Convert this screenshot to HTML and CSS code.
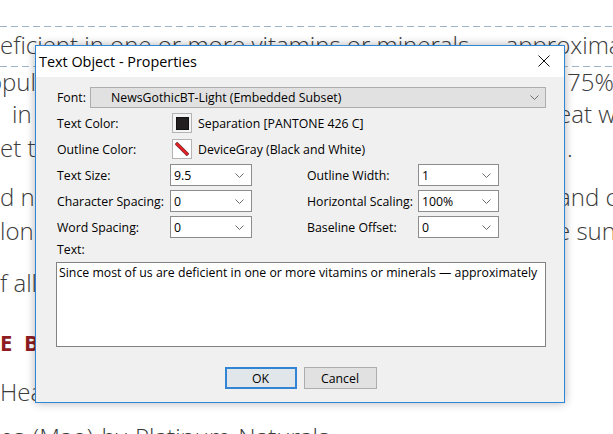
FILE: index.html
```html
<!DOCTYPE html>
<html>
<head>
<meta charset="utf-8">
<link rel="stylesheet" href="styles.css">
</head>
<body>
<div class="page">
  <div class="dash"></div>
  <div class="line l1"><span class="full">eficient in one or more vitamins or minerals — approximately</span></div>
  <div class="dash d2"></div>
  <div class="line l2"><span class="lt"><span class="sh-o">opul</span></span><span class="rt r75">75%</span></div>
  <div class="line l3"><span class="lt"><span class="sh-in">in</span></span><span class="rt reat">eat w</span></div>
  <div class="line l4"><span class="lt">et t</span><span class="rt rdot">.</span></div>
  <div class="line l5"><span class="lt">d nu</span><span class="rt rand">and c</span></div>
  <div class="line l6"><span class="lt">lon</span><span class="rt rsun">e sun</span></div>
  <div class="line l7"><span class="lt">f all</span></div>
  <div class="line l8 red"><span class="lt">E B</span></div>
  <div class="line l9"><span class="lt">Hea</span></div>
  <div class="line l10"><span class="full sh-mao">es (Mao) by Platinum Naturals</span></div>
</div>

<div class="dialog">
  <div class="titlebar">
    <span class="title">Text Object - Properties</span>
    <svg class="close" width="12" height="12" viewBox="0 0 12 12"><path d="M0.5 0.5 L11.5 11.5 M11.5 0.5 L0.5 11.5" stroke="#111" stroke-width="1" fill="none"/></svg>
  </div>
  <div class="dbody">
    <div class="row">
      <span class="lbl lfont">Font:</span>
      <div class="select">
        <span class="val">NewsGothicBT-Light (Embedded Subset)</span>
        <svg class="chev" width="9" height="5" viewBox="0 0 9 5"><polyline points="0.5,0.5 4.5,4.5 8.5,0.5" fill="none" stroke="#6d6d6d" stroke-width="1"/></svg>
      </div>
    </div>
    <div class="row">
      <span class="lbl c1">Text Color:</span>
      <span class="swatch"><span class="dark"></span></span>
      <span class="swtext">Separation [PANTONE 426 C]</span>
    </div>
    <div class="row">
      <span class="lbl c1">Outline Color:</span>
      <span class="swatch white">
        <svg width="14" height="14" viewBox="0 0 14 14"><polygon points="0,2.2 2.2,0 14,11.8 11.8,14" fill="#e01e24" stroke="#3a1a1a" stroke-width="0.6"/></svg>
      </span>
      <span class="swtext">DeviceGray (Black and White)</span>
    </div>
    <div class="row">
      <span class="lbl c1">Text Size:</span>
      <div class="combo"><span class="val">9.5</span><svg class="chev" width="9" height="5" viewBox="0 0 9 5"><polyline points="0.5,0.5 4.5,4.5 8.5,0.5" fill="none" stroke="#6d6d6d" stroke-width="1"/></svg></div>
      <span class="lbl c3">Outline Width:</span>
      <div class="combo"><span class="val">1</span><svg class="chev" width="9" height="5" viewBox="0 0 9 5"><polyline points="0.5,0.5 4.5,4.5 8.5,0.5" fill="none" stroke="#6d6d6d" stroke-width="1"/></svg></div>
    </div>
    <div class="row">
      <span class="lbl c1">Character Spacing:</span>
      <div class="combo"><span class="val">0</span><svg class="chev" width="9" height="5" viewBox="0 0 9 5"><polyline points="0.5,0.5 4.5,4.5 8.5,0.5" fill="none" stroke="#6d6d6d" stroke-width="1"/></svg></div>
      <span class="lbl c3">Horizontal Scaling:</span>
      <div class="combo"><span class="val">100%</span><svg class="chev" width="9" height="5" viewBox="0 0 9 5"><polyline points="0.5,0.5 4.5,4.5 8.5,0.5" fill="none" stroke="#6d6d6d" stroke-width="1"/></svg></div>
    </div>
    <div class="row">
      <span class="lbl c1">Word Spacing:</span>
      <div class="combo"><span class="val">0</span><svg class="chev" width="9" height="5" viewBox="0 0 9 5"><polyline points="0.5,0.5 4.5,4.5 8.5,0.5" fill="none" stroke="#6d6d6d" stroke-width="1"/></svg></div>
      <span class="lbl c3">Baseline Offset:</span>
      <div class="combo"><span class="val">0</span><svg class="chev" width="9" height="5" viewBox="0 0 9 5"><polyline points="0.5,0.5 4.5,4.5 8.5,0.5" fill="none" stroke="#6d6d6d" stroke-width="1"/></svg></div>
    </div>
    <div class="textlbl">Text:</div>
    <div class="textarea">Since most of us are deficient in one or more vitamins or minerals — approximately</div>
    <div class="buttons">
      <button class="btn ok">OK</button>
      <button class="btn">Cancel</button>
    </div>
  </div>
</div>
</body>
</html>
```

FILE: styles.css
```css
* { box-sizing: border-box; margin: 0; padding: 0; }
html, body { width: 613px; height: 434px; overflow: hidden; background: #ffffff; }
body { position: relative; font-family: "Open Sans", "Noto Sans", sans-serif; }

.page {
  padding-top: 26px;
  color: #3b3b3b;
  font-weight: 300;
  font-size: 24px;
}
.dash {
  height: 1px;
  background: repeating-linear-gradient(90deg, #9fb3c7 0 7px, transparent 7px 11px);
}
.line {
  display: flex;
  white-space: nowrap;
  overflow: hidden;
  height: 34px;
  line-height: 34px;
}
.lt { width: 560px; flex: none; overflow: hidden; }
.rt { flex: none; }
.full { flex: none; }
.l1 { height: 39px; line-height: 36px; }
.l2 { height: 30px; line-height: 30px; }
.l5 { margin-top: 15px; }
.l7 { margin-top: 18px; }
.l8 { margin-top: 25px; }
.l9 { margin-top: 16px; }
.l10 { margin-top: 11px; }
.sh-o { margin-left: -12px; }
.sh-in { margin-left: 12px; }
.sh-mao { margin-left: 0; word-spacing: 2px; }
.r75 { margin-left: 7px; }
.reat { margin-left: -2px; }
.rdot { margin-left: 7px; }
.rand { margin-left: -2px; }
.rsun { margin-left: -3px; }
.red { color: #8e1c22; font-weight: 700; font-size: 22px; letter-spacing: 2px; word-spacing: 2px; }

.dialog {
  position: absolute;
  left: 35px;
  top: 45px;
  width: 530px;
  height: 358px;
  border: 1px solid #2f86d6;
  background: #f0f0f0;
  box-shadow: 0 0 9px rgba(0, 0, 0, 0.3);
  font-family: "Open Sans", "Noto Sans", sans-serif;
  font-size: 12.3px;
  color: #000;
}
.titlebar {
  height: 31px;
  background: #ffffff;
  display: flex;
  align-items: center;
  justify-content: space-between;
  padding: 0 14px 0 3px;
}
.title { font-size: 14.4px; color: #000; }
.close { display: block; margin-top: -2px; }

.dbody {
  padding: 10px 18px 0 21px;
  display: flex;
  flex-direction: column;
  gap: 4px;
}
.row { display: flex; align-items: center; height: 22px; }
.row:first-child { height: 21px; }
.lbl { flex: none; white-space: nowrap; }
.lfont { width: 33px; }
.c1 { width: 113px; }
.c3 { width: 111px; margin-left: 55px; }

.select {
  flex: 1;
  height: 21px;
  background: #e1e1e1;
  border: 1px solid #adadad;
  display: flex;
  align-items: center;
  justify-content: space-between;
  padding: 0 6px 0 20px;
}
.combo {
  flex: none;
  width: 82px;
  height: 22px;
  background: #ffffff;
  border: 1px solid #8c8c8c;
  display: flex;
  align-items: center;
  justify-content: space-between;
  padding: 0 7px 0 3px;
}
.combo + .lbl + .combo { width: 81px; }
.chev { display: block; }

.swatch {
  flex: none;
  width: 20px;
  height: 20px;
  margin-left: 2px;
  border: 1px solid #b4b4b4;
  background: #f4f4f4;
  display: flex;
  align-items: center;
  justify-content: center;
}
.swatch .dark { width: 13px; height: 13px; background: #231f20; border: 1px solid #111; }
.swatch.white { background: #ffffff; }
.swatch svg { display: block; }
.swtext { margin-left: 6px; white-space: nowrap; }

.textlbl { height: 16px; line-height: 16px; }
.textarea {
  margin-left: -1px;
  height: 85px;
  background: #ffffff;
  border: 1px solid #828282;
  padding: 2px 2px;
  line-height: 16px;
  white-space: nowrap;
  overflow: hidden;
}
.buttons {
  margin-top: 16px;
  display: flex;
  justify-content: center;
  gap: 7px;
  padding-right: 2px;
}
.btn {
  width: 72px;
  height: 22px;
  font-family: inherit;
  font-size: 12.3px;
  color: #000;
  background: #e1e1e1;
  border: 1px solid #adadad;
}
.btn.ok {
  border: 2px solid #3284d4;
  background: #e1e6ea;
}
.btn + .btn { width: 73px; }
```
